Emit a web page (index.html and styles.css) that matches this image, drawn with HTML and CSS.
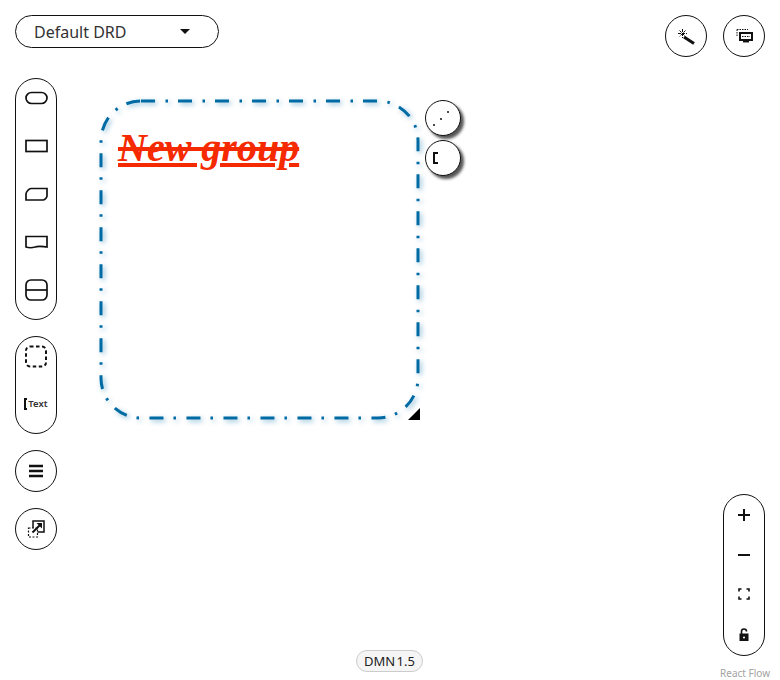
FILE: index.html
```html
<!DOCTYPE html>
<html lang="en">

<head>
    <meta charset="UTF-8">
    <meta name="viewport" content="width=device-width, initial-scale=1.0">
    <title>DMN Editor</title>
    <link rel="stylesheet" href="styles.css">
</head>

<body>
    <div class="editor">
        <div class="left-panel">
            <div class="drd-select">
                <span>Default DRD</span>
                <i class="caret"></i>
            </div>
            <div class="pill palette-nodes">
                <svg width="24" height="16" viewBox="0 0 24 16"><rect x="2" y="2.5" width="21" height="11" rx="5.5" /></svg>
                <svg width="24" height="16" viewBox="0 0 24 16"><rect x="2" y="2.5" width="21" height="11" /></svg>
                <svg width="24" height="16" viewBox="0 0 24 16"><path d="M2 14 V8 C2 6 5 2.5 7 2.5 H23 V10 C23 11.5 20.5 14 19 14 Z" /></svg>
                <svg width="24" height="16" viewBox="0 0 24 16"><path d="M2 2.5 H23 V13 C18 12.5 15 11.5 11 13 C8 14 5 14 2 13 Z" /></svg>
                <svg width="24" height="22" viewBox="0 0 24 22"><rect x="2" y="1" width="21" height="20" rx="5" /><path d="M2 11 H23" /></svg>
            </div>
            <div class="pill palette-extra">
                <svg width="24" height="24" viewBox="0 0 24 24"><rect class="dashed" x="2" y="2.5" width="20" height="20" rx="4" /></svg>
                <div class="text-tool"><i class="bracket"></i>Text</div>
            </div>
            <div class="round">
                <svg width="16" height="14" viewBox="0 0 16 14"><path class="bars" d="M1 2 H15 M1 7 H15 M1 12 H15" /></svg>
            </div>
            <div class="round">
                <svg width="18" height="18" viewBox="0 0 18 18">
                    <path class="frame" d="M6 1 H17 V12 H6 Z" />
                    <rect class="dashed-thin" x="1.5" y="8" width="9" height="9" />
                    <path class="arrow" d="M5.5 12.5 L13 5" />
                    <path class="arrow-head" d="M9.5 3 H15 V8.5 Z" />
                </svg>
            </div>
        </div>

        <div class="right-panel">
            <div class="top-buttons">
                <div class="round">
                    <svg width="18" height="18" viewBox="0 0 18 18">
                        <path class="wand" d="M7 10 L17 16.5" />
                        <path class="spark" d="M5.5 2 V11 M1 6.5 H10 M2.5 3.5 L8.5 9.5 M8.5 3.5 L2.5 9.5" />
                    </svg>
                </div>
                <div class="round">
                    <svg width="18" height="16" viewBox="0 0 18 16">
                        <path class="dots" d="M2 1.5 H13 M2 1.5 V9" />
                        <rect class="screen" x="5" y="5" width="12" height="7" />
                        <path class="dots" d="M7 8.5 H15" />
                        <path class="stand" d="M8 13.7 H14" />
                    </svg>
                </div>
            </div>
            <div class="bottom-controls">
                <div class="pill zoom-controls">
                    <svg width="14" height="14" viewBox="0 0 14 14"><path class="bars" d="M7 1 V13 M1 7 H13" /></svg>
                    <svg width="14" height="14" viewBox="0 0 14 14"><path class="bars" d="M1 7 H13" /></svg>
                    <svg width="12" height="12" viewBox="0 0 12 12"><path class="bars thin" d="M1 3.5 V1 H3.5 M8.5 1 H11 V3.5 M11 8.5 V11 H8.5 M3.5 11 H1 V8.5" /></svg>
                    <svg width="12" height="14" viewBox="0 0 12 14"><path class="shackle" d="M3.5 6 V3.5 A2.5 2.5 0 0 1 8.5 3.5" /><path class="lock" fill-rule="evenodd" d="M1.5 5.5 H10.5 V13 H1.5 Z M6 8.4 A1 1 0 1 0 6 10.4 A1 1 0 1 0 6 8.4 Z" /></svg>
                </div>
                <div class="attribution">React Flow</div>
            </div>
        </div>

        <div class="version">DMN 1.5</div>

        <!-- group node sits on the diagram canvas -->
        <div class="group-node">
            <svg width="340" height="340" viewBox="0 0 340 340">
                <defs>
                    <filter id="groupShadow" x="-5%" y="-5%" width="110%" height="110%">
                        <feDropShadow dx="2" dy="2" stdDeviation="2.5" flood-color="#006ba4" flood-opacity="0.45" />
                    </filter>
                </defs>
                <rect class="group-shape" x="11" y="11" width="317" height="317" rx="40" filter="url(#groupShadow)" />
            </svg>
            <div class="group-title">New group</div>
            <i class="resizer"></i>
        </div>
        <div class="handle handle-edge">
            <svg width="18" height="18" viewBox="0 0 18 18"><path class="edge-dots" d="M1 16 h.01 M8 10 h.01 M15 3 h.01" /></svg>
        </div>
        <div class="handle handle-text"><i class="bracket"></i></div>
    </div>
</body>

</html>
```

FILE: styles.css
```css
body {
    font-family: "Noto Sans", Arial, sans-serif;
    margin: 0;
    padding: 0;
    background-color: #fff;
}

.editor {
    position: relative;
    width: 780px;
    height: 680px;
    box-sizing: border-box;
    padding: 15px 15px 0 15px;
    display: flex;
    justify-content: space-between;
    overflow: hidden;
}

svg {
    display: block;
    fill: none;
    stroke: #111;
    stroke-width: 1.7;
}

.left-panel {
    display: flex;
    flex-direction: column;
    align-items: flex-start;
    gap: 16px;
}

.right-panel {
    display: flex;
    flex-direction: column;
    align-items: flex-end;
    justify-content: space-between;
}

.top-buttons {
    display: flex;
    gap: 16px;
}

.bottom-controls {
    display: flex;
    flex-direction: column;
    align-items: flex-end;
    gap: 10px;
}

.drd-select {
    box-sizing: border-box;
    width: 204px;
    height: 33px;
    margin-bottom: 14px;
    padding: 0 28px 0 18px;
    display: flex;
    align-items: center;
    justify-content: space-between;
    border: 1px solid #111;
    border-radius: 17px;
    font-size: 16px;
    color: #333;
}

.caret {
    border-left: 5px solid transparent;
    border-right: 5px solid transparent;
    border-top: 5px solid #111;
}

.pill,
.round {
    box-sizing: border-box;
    width: 42px;
    border: 1px solid #111;
    border-radius: 21px;
    background-color: #fff;
    display: flex;
    flex-direction: column;
    align-items: center;
}

.round {
    height: 42px;
    justify-content: center;
}

.palette-nodes {
    height: 242px;
    padding-top: 11px;
    gap: 32px;
}

.palette-nodes svg:last-child {
    margin-top: -3px;
}

.palette-extra {
    height: 98px;
    padding-top: 7px;
    gap: 30px;
}

.dashed {
    stroke-width: 2;
    stroke-dasharray: 3.5 2.5;
}

.text-tool {
    display: flex;
    align-items: center;
    gap: 1px;
    font-size: 9.5px;
    line-height: 12px;
    font-weight: 600;
    color: #333;
}

.bracket {
    display: block;
    width: 3px;
    height: 12px;
    border: 2px solid #111;
    border-right: 0;
    box-sizing: border-box;
}

.bars {
    stroke-width: 2;
}

.round .bars {
    stroke-width: 2.5;
}

.bars.thin {
    stroke-width: 1.6;
}

.dashed-thin {
    stroke-width: 1.2;
    stroke-dasharray: 2 1.5;
    fill: #fff;
}

.frame {
    stroke-width: 1.5;
}

.arrow {
    stroke-width: 2;
}

.arrow-head {
    fill: #111;
    stroke: none;
}

.wand {
    stroke-width: 3;
}

.spark {
    stroke-width: 1;
    stroke-dasharray: 3 1;
}

.dots {
    stroke-width: 1;
    stroke-dasharray: 1.5 1;
}

.screen {
    stroke-width: 2;
}

.stand {
    stroke-width: 1.5;
}

.shackle {
    stroke-width: 1.6;
}

.lock {
    fill: #111;
    stroke: none;
}

.zoom-controls {
    height: 162px;
    padding-top: 13px;
    gap: 26px;
}

.zoom-controls svg:nth-child(4) {
    margin-top: 2px;
}

.attribution {
    margin-right: -10px;
    padding: 0 5px;
    font-size: 10px;
    line-height: 14px;
    color: #a3a3a3;
}

.version {
    position: absolute;
    left: 356px;
    top: 650px;
    box-sizing: border-box;
    width: 67px;
    height: 22px;
    border: 1px solid #ccc;
    border-radius: 11px;
    background-color: #f5f5f5;
    font-size: 13px;
    line-height: 20px;
    word-spacing: -2px;
    text-align: center;
    color: #222;
}

.group-node {
    position: absolute;
    left: 90px;
    top: 90px;
    width: 340px;
    height: 340px;
}

.group-shape {
    fill: none;
    stroke: #006ba4;
    stroke-width: 3;
    stroke-dasharray: 14 10.5 2.5 10;
}

.group-title {
    position: absolute;
    left: 28px;
    top: 35px;
    font-family: "Liberation Serif", serif;
    font-size: 40px;
    line-height: 46px;
    font-weight: bold;
    font-style: italic;
    color: #f52a00;
    text-decoration: underline line-through;
    white-space: nowrap;
}

.resizer {
    position: absolute;
    left: 318px;
    top: 318px;
    width: 0;
    height: 0;
    border-left: 12px solid transparent;
    border-bottom: 12px solid #000;
}

.handle {
    position: absolute;
    left: 425px;
    box-sizing: border-box;
    width: 36px;
    height: 36px;
    border: 1px solid #111;
    border-radius: 50%;
    background-color: #fff;
    box-shadow: 3px 3px 3px #555;
    display: flex;
    align-items: center;
    padding-left: 7px;
}

.handle-edge {
    top: 100px;
}

.handle-text {
    top: 140px;
}

.handle .bracket {
    width: 5px;
}

.edge-dots {
    stroke-width: 2;
    stroke-linecap: round;
}
```
